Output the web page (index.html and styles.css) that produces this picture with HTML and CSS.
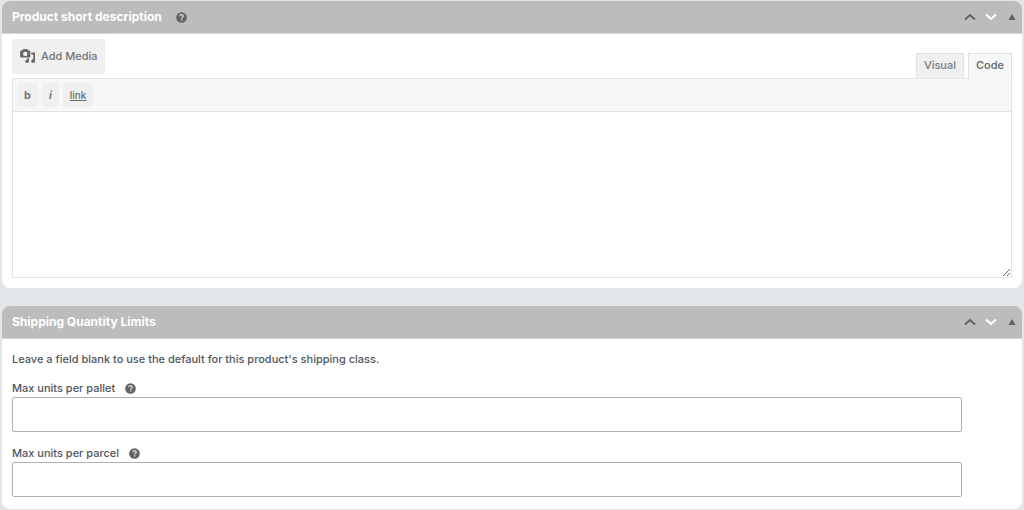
FILE: index.html
```html
<!DOCTYPE html>
<html lang="en">
<head>
    <meta charset="UTF-8">
    <meta name="viewport" content="width=device-width, initial-scale=1.0">
    <title>Edit product</title>
    <link rel="stylesheet" href="styles.css">
</head>
<body>

<svg class="sprite" aria-hidden="true">
    <symbol id="icon-help" viewBox="0 0 12 12">
        <circle cx="6" cy="6" r="5.8" fill="#646464"/>
        <path d="M4.200 4.700c0-1.100.8-1.700 1.900-1.700s1.800.6 1.800 1.500c0 1.200-1.700 1.200-1.700 2.500" fill="none" stroke="#d4d4d4" stroke-width="1.500"/>
        <rect x="5.400" y="7.800" width="1.600" height="1.500" fill="#d4d4d4"/>
    </symbol>
    <symbol id="icon-up" viewBox="0 0 12 8">
        <path d="M1 6.600 6 2l5 4.600" fill="none" stroke="currentColor" stroke-width="2"/>
    </symbol>
    <symbol id="icon-down" viewBox="0 0 12 8">
        <path d="M1 1.400 6 6l5-4.600" fill="none" stroke="currentColor" stroke-width="2"/>
    </symbol>
    <symbol id="icon-toggle" viewBox="0 0 8 6">
        <path d="M4 0l3.500 6h-7z" fill="currentColor"/>
    </symbol>
</svg>

<div class="postbox">
    <div class="postbox-header">
        <h2>Product short description</h2>
        <svg class="help"><use href="#icon-help"/></svg>
        <div class="handle-actions">
            <button type="button" class="handle" aria-label="Move up"><svg class="arrow"><use href="#icon-up"/></svg></button>
            <button type="button" class="handle handle-down" aria-label="Move down"><svg class="arrow"><use href="#icon-down"/></svg></button>
            <button type="button" class="handle" aria-label="Toggle panel"><svg class="toggle"><use href="#icon-toggle"/></svg></button>
        </div>
    </div>
    <div class="inside editor">
        <div class="editor-tools">
            <button type="button" class="add-media">
                <svg class="media-icon" viewBox="0 0 16 16">
                    <path fill="currentColor" fill-rule="evenodd" d="M1 2.500h1.200L3.200 1h4l1 1.500H9.500q.8 0 .8.800v5.400q0 .8-.8.800H1q-.8 0-.8-.8V3.300Q.200 2.500 1 2.500zM5.200 3.700a2.200 2.200 0 1 0 0 4.400a2.200 2.200 0 1 0 0-4.400z"/>
                    <path fill="currentColor" d="M11.300 4.500H15V13A1.900 1.800 0 1 1 13.300 11.300V6.500h-2z"/>
                    <path fill="currentColor" d="M7.300 10.200H9V13.200A1.900 1.800 0 1 1 7.300 11.400z"/>
                </svg>
                Add Media
            </button>
            <div class="editor-tabs">
                <button type="button" class="tab">Visual</button>
                <button type="button" class="tab tab-active">Code</button>
            </div>
        </div>
        <div class="editor-container">
            <div class="quicktags">
                <button type="button" class="tag">b</button>
                <button type="button" class="tag tag-em">i</button>
                <button type="button" class="tag tag-link">link</button>
            </div>
            <textarea class="editor-area" aria-label="Product short description"></textarea>
        </div>
    </div>
</div>

<div class="postbox">
    <div class="postbox-header">
        <h2>Shipping Quantity Limits</h2>
        <div class="handle-actions">
            <button type="button" class="handle" aria-label="Move up"><svg class="arrow"><use href="#icon-up"/></svg></button>
            <button type="button" class="handle handle-down" aria-label="Move down"><svg class="arrow"><use href="#icon-down"/></svg></button>
            <button type="button" class="handle" aria-label="Toggle panel"><svg class="toggle"><use href="#icon-toggle"/></svg></button>
        </div>
    </div>
    <div class="inside limits">
        <p class="intro">Leave a field blank to use the default for this product's shipping class.</p>
        <div class="field">
            <div class="field-label">
                <label for="max-pallet">Max units per pallet</label>
                <svg class="help"><use href="#icon-help"/></svg>
            </div>
            <input type="text" id="max-pallet">
        </div>
        <div class="field">
            <div class="field-label">
                <label for="max-parcel">Max units per parcel</label>
                <svg class="help"><use href="#icon-help"/></svg>
            </div>
            <input type="text" id="max-parcel">
        </div>
    </div>
</div>

</body>
</html>
```

FILE: styles.css
```css
* {
    box-sizing: border-box;
}

body {
    margin: 0;
    padding: 1px 2px 0 2px;
    background: #e2e6e9;
    color: #50565c;
    font-family: Inter, "Liberation Sans", sans-serif;
    font-size: 11px;
    font-weight: 500;
    line-height: 16px;
}

button {
    margin: 0;
    border: 0;
    font: inherit;
    cursor: pointer;
}

svg {
    display: block;
    flex: none;
}

.sprite {
    position: absolute;
    width: 0;
    height: 0;
}

.postbox {
    margin-bottom: 18px;
    background: #fff;
    border-radius: 8px;
    overflow: hidden;
}

.postbox:last-child {
    margin-bottom: 0;
}

.postbox-header {
    display: flex;
    align-items: center;
    height: 33px;
    padding-left: 10px;
    background: #bcbcbc;
    border-bottom: 1px solid #d4d6d8;
}

.postbox-header h2 {
    margin: 0;
    color: #fff;
    font-size: 12px;
    font-weight: 700;
}

.help {
    width: 11px;
    height: 11px;
    margin-left: 10px;
}

.postbox-header .help {
    margin-left: 14px;
}

.handle-actions {
    display: flex;
    align-items: center;
    margin-left: auto;
}

.handle {
    display: flex;
    justify-content: center;
    width: 21px;
    padding: 0;
    background: none;
    color: #5f6368;
}

.handle-down {
    color: #fff;
}

.arrow {
    width: 12px;
    height: 8px;
}

.toggle {
    width: 8px;
    height: 6px;
}

.inside {
    padding: 0 10px;
}

.editor {
    padding-top: 5px;
    padding-bottom: 10px;
}

.editor-tools {
    display: flex;
    justify-content: space-between;
    align-items: flex-start;
}

.add-media {
    display: flex;
    align-items: center;
    gap: 5px;
    height: 35px;
    margin-bottom: 4px;
    padding: 0 7px 1px 8px;
    background: #f0f0f0;
    border-radius: 2px;
    color: #747474;
}

.media-icon {
    width: 16px;
    height: 16px;
    color: #666;
}

.editor-tabs {
    display: flex;
    align-self: flex-end;
    gap: 4px;
}

.tab {
    position: relative;
    height: 25px;
    padding: 0 7px 2px;
    background: #f0f0f1;
    border: 1px solid #dfe0e2;
    border-bottom: 0;
    color: #74797f;
}

/* the open tab covers the top border of the toolbar */
.tab-active {
    height: 26px;
    margin-bottom: -1px;
    padding-bottom: 3px;
    background: #f6f7f7;
    color: #60666c;
}

.editor-container {
    border: 1px solid #e2e3e5;
}

.quicktags {
    display: flex;
    gap: 4px;
    padding: 4px;
    background: #f6f7f7;
    border-bottom: 1px solid #e2e3e5;
}

.tag {
    height: 24px;
    padding: 0 7px;
    background: #f0f0f0;
    border-radius: 2px;
    color: #6c6c6c;
    font-weight: 600;
}

.tag-em {
    font-style: italic;
}

.tag-link {
    font-size: 10px;
    font-weight: 500;
    text-decoration: underline;
}

.editor-area {
    display: block;
    width: 100%;
    height: 165px;
    padding: 8px;
    border: 0;
    resize: vertical;
    font: inherit;
}

.limits {
    padding-top: 12px;
    padding-bottom: 12px;
}

.intro {
    margin: 0 0 13px;
}

.field {
    margin-bottom: 13px;
}

.field:last-child {
    margin-bottom: 0;
}

.field-label {
    display: flex;
    align-items: center;
    padding-bottom: 1px;
}

.field input {
    display: block;
    width: 95%;
    height: 35px;
    padding: 0 8px;
    border: 1px solid #b0b0b0;
    border-radius: 2px;
    font: inherit;
}
```
